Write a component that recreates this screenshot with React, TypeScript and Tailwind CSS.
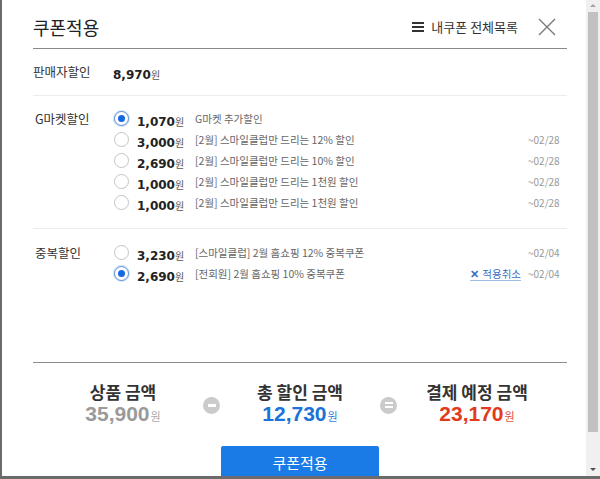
import { FC } from "react";

const KR = "font-['Noto_Sans_CJK_KR','Noto_Sans',sans-serif]";
const NUM = "font-['DejaVu_Sans','Noto_Sans_CJK_KR',sans-serif]";

interface Coupon {
  amount: string;
  desc: string;
  until?: string;
  checked?: boolean;
  cancel?: boolean;
}

const gmarket: Coupon[] = [
  { amount: "1,070", desc: "G마켓 추가할인", checked: true },
  { amount: "3,000", desc: "[2월] 스마일클럽만 드리는 12% 할인", until: "~02/28" },
  { amount: "2,690", desc: "[2월] 스마일클럽만 드리는 10% 할인", until: "~02/28" },
  { amount: "1,000", desc: "[2월] 스마일클럽만 드리는 1천원 할인", until: "~02/28" },
  { amount: "1,000", desc: "[2월] 스마일클럽만 드리는 1천원 할인", until: "~02/28" },
];

const duplicate: Coupon[] = [
  { amount: "3,230", desc: "[스마일클럽] 2월 홈쇼핑 12% 중복쿠폰", until: "~02/04" },
  { amount: "2,690", desc: "[전회원] 2월 홈쇼핑 10% 중복쿠폰", until: "~02/04", checked: true, cancel: true },
];

const Radio: FC<{ checked?: boolean }> = ({ checked }) =>
  checked ? (
    <span className="flex h-[15px] w-[15px] items-center justify-center rounded-full border border-[#5a8fd8] bg-white shadow-[0_0_0_1px_#d6e5f7]">
      <span className="h-[7px] w-[7px] rounded-full bg-[#1668e3]" />
    </span>
  ) : (
    <span className="h-[15px] w-[15px] rounded-full border border-[#c4c4c4] bg-white" />
  );

const CouponRow: FC<{ c: Coupon }> = ({ c }) => (
  <div className="flex h-[21px] items-center pr-2">
    <div className="flex w-[23px] items-center">
      <Radio checked={c.checked} />
    </div>
    <div className="w-[58px] text-[#222]">
      <span className={`${NUM} text-[12px] font-bold`}>{c.amount}</span>
      <span className="text-[10px] text-[#555]">원</span>
    </div>
    <div className="flex-1 text-[10.5px] text-[#666]">{c.desc}</div>
    {c.cancel && (
      <span className="mr-[7px] border-b border-[#9fc0e6] text-[10.5px] leading-[13px] text-[#3a6fc4]">
        <span className="mr-[3px] font-bold">✕</span>적용취소
      </span>
    )}
    <span className="w-[31px] text-right text-[10px] text-[#999]">{c.until}</span>
  </div>
);

const Circle: FC<{ eq?: boolean }> = ({ eq }) => (
  <div className="flex h-[17px] w-[17px] flex-none items-center justify-center rounded-full bg-[#cbcbcb]">
    {eq ? (
      <div className="flex flex-col gap-[2px]">
        <span className="block h-[2px] w-[8px] bg-white" />
        <span className="block h-[2px] w-[8px] bg-white" />
      </div>
    ) : (
      <span className="block h-[3px] w-[8px] bg-white" />
    )}
  </div>
);

const Total: FC<{ label: string; value: string; color: string; unit: string }> = ({
  label,
  value,
  color,
  unit,
}) => (
  <div className="flex w-[142px] flex-col items-center">
    <div className="text-[17px] font-semibold leading-[20px] text-[#333]">{label}</div>
    <div className="leading-[24px]">
      <span className={`font-['Liberation_Sans',sans-serif] text-[21px] font-bold ${color}`}>{value}</span>
      <span className={`ml-[1px] text-[11px] ${unit}`}>원</span>
    </div>
  </div>
);

const App: FC = () => {
  return (
    <div className={`flex h-[479px] w-[600px] overflow-hidden border-b-[3px] border-l-2 border-[#6b6b6b] bg-white ${KR}`}>
      <div className="flex flex-1 flex-col pl-[31px] pr-[19px]">
        {/* header */}
        <div className="flex shrink-0 items-center justify-between border-b border-[#8a8a8a] pt-[14px] pb-[8px]">
          <h1 className="text-[18px] leading-[26px] text-[#222]">쿠폰적용</h1>
          <div className="flex items-center pr-[11px]">
            <span className="mr-[7px] flex flex-col gap-[2px]">
              <span className="block h-[2px] w-[12px] bg-[#333]" />
              <span className="block h-[2px] w-[12px] bg-[#333]" />
              <span className="block h-[2px] w-[12px] bg-[#333]" />
            </span>
            <span className="text-[13px] text-[#333]">내쿠폰 전체목록</span>
            <svg className="ml-[20px]" width="18" height="18" viewBox="0 0 18 18">
              <path d="M1 1 L17 17 M17 1 L1 17" stroke="#777" strokeWidth="1.3" />
            </svg>
          </div>
        </div>

        {/* seller discount */}
        <div className="flex h-[47px] shrink-0 items-center border-b border-[#ececec]">
          <div className="w-[80px] text-[12.5px] text-[#333]">판매자할인</div>
          <div className="text-[#222]">
            <span className={`${NUM} text-[12px] font-bold`}>8,970</span>
            <span className="text-[10px] text-[#555]">원</span>
          </div>
        </div>

        {/* gmarket discount */}
        <div className="flex shrink-0 border-b border-[#ececec] pt-[12px] pb-[15px]">
          <div className="w-[81px] pl-[2px] text-[12.5px] leading-[21px] text-[#333]">G마켓할인</div>
          <div className="flex-1">
            {gmarket.map((c, i) => (
              <CouponRow key={i} c={c} />
            ))}
          </div>
        </div>

        {/* duplicate discount */}
        <div className="flex h-[134px] shrink-0 border-b border-[#8a8a8a] pt-[13px]">
          <div className="w-[81px] pl-[2px] text-[12.5px] leading-[21px] text-[#333]">중복할인</div>
          <div className="flex-1">
            {duplicate.map((c, i) => (
              <CouponRow key={i} c={c} />
            ))}
          </div>
        </div>

        {/* totals */}
        <div className="flex shrink-0 items-center justify-center gap-[9px] pt-[19px]">
          <Total label="상품 금액" value="35,900" color="text-[#9a9a9a]" unit="text-[#aaa]" />
          <Circle />
          <Total label="총 할인 금액" value="12,730" color="text-[#1a73d9]" unit="text-[#3a7fd6]" />
          <Circle eq />
          <Total label="결제 예정 금액" value="23,170" color="text-[#e23a1b]" unit="text-[#e0533b]" />
        </div>

        <div className="mt-[18px] flex shrink-0 justify-center">
          <button className="h-[34px] w-[158px] rounded-t-[2px] bg-[#1b7be6] text-[15px] text-white">쿠폰적용</button>
        </div>
      </div>

      {/* scrollbar */}
      <div className="flex w-[14px] flex-col items-center bg-[#f0f0f0]">
        <span className="mt-[4px] h-0 w-0 border-x-[3px] border-b-[3px] border-x-transparent border-b-[#a3a3a3]" />
        <div className="mt-[5px] h-[420px] w-[10px] bg-[#c1c1c1]" />
        <div className="flex-1" />
        <span className="mb-[5px] h-0 w-0 border-x-[3px] border-t-[3px] border-x-transparent border-t-[#505050]" />
      </div>
    </div>
  );
};

export default App;
